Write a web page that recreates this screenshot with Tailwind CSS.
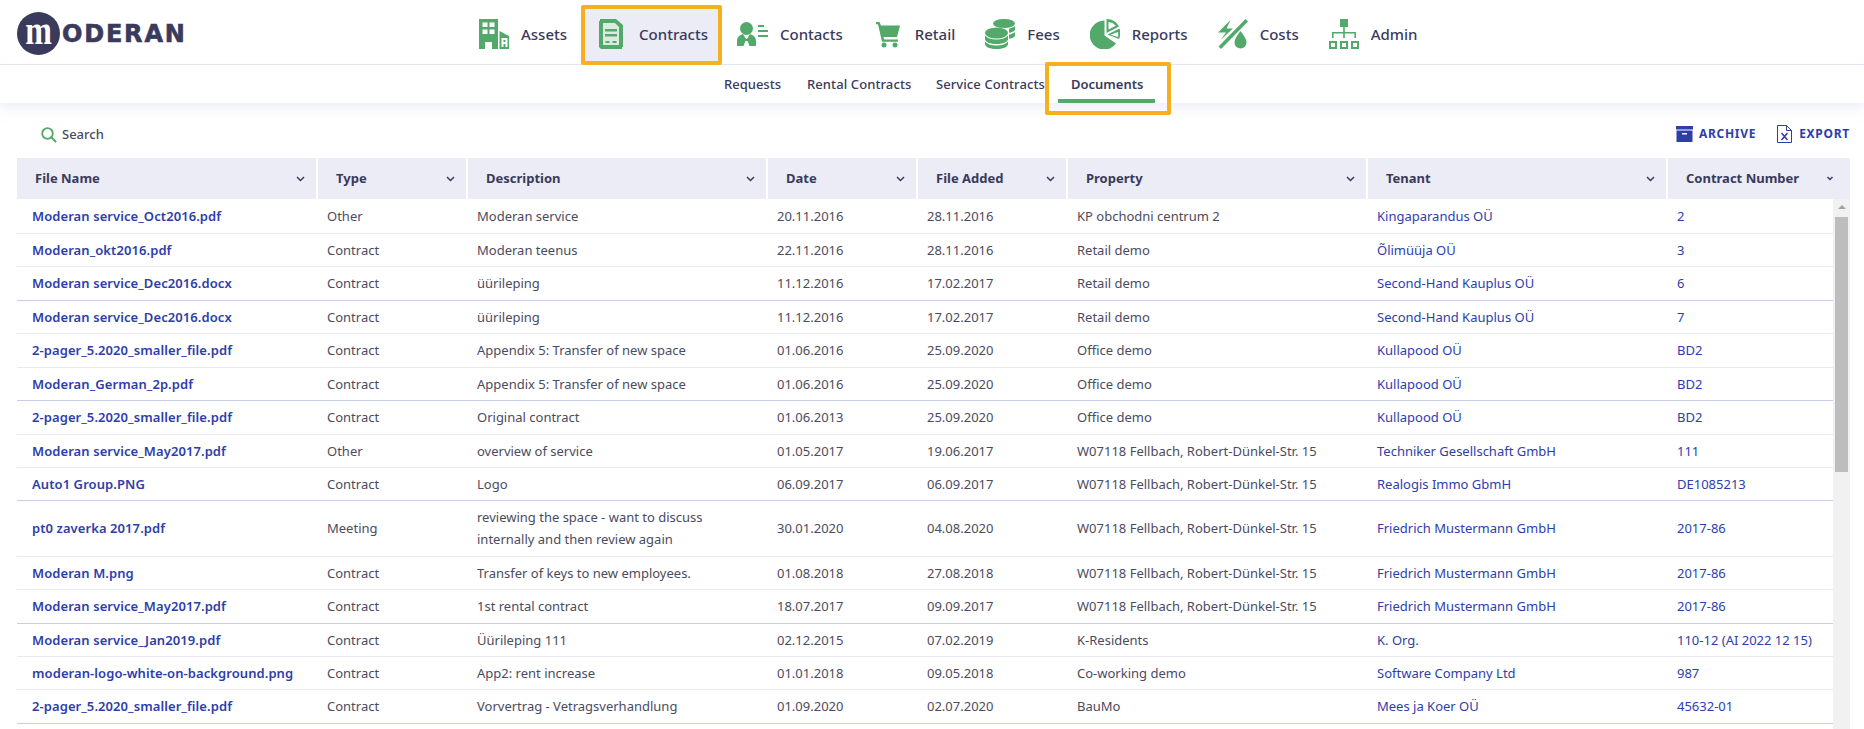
<!DOCTYPE html>
<html lang="en">
<head>
    <meta charset="UTF-8">
    <title>Moderan - Documents</title>
    <script src="https://cdn.jsdelivr.net/npm/@tailwindcss/browser@4"></script>
</head>
<body class="h-screen overflow-hidden bg-white font-['Noto_Sans',sans-serif] text-[13px] text-[#4b4b60]">

    <!-- top bar -->
    <header class="relative h-[65px] border-b border-[#e4e6f4]">
        <a href="#" class="absolute left-[17px] top-[12px] flex items-center">
            <span class="flex h-[43px] w-[43px] items-center justify-center rounded-full bg-[#3a3a5c] font-['Liberation_Serif',serif] text-[40px] leading-[34px] font-bold text-white"><span class="-mt-[6px] scale-x-[.8]">m</span></span>
            <span class="ml-[2px] font-['DejaVu_Sans',sans-serif] text-[24px] leading-none font-bold tracking-[1.8px] text-[#3a3a5c] [-webkit-text-stroke:0.6px_#3a3a5c]">ODERAN</span>
        </a>
        <nav class="absolute top-0 left-[464px] flex h-[68px] text-[15px] font-medium text-[#3a3a5c]">
            <a href="#" class="flex items-center gap-[12px] pr-[14px] pl-[15px]">
                <svg class="h-[30px] w-[30px] fill-[#52a96a]" viewBox="0 0 30 30"><path fill-rule="evenodd" d="M0 0h19v30h-6v-7H6v7H0zM3.500 3.500v4.500h5v-4.500zM10.500 3.500v4.500h5v-4.500zM3.500 10.500v4.500h5v-4.500zM10.500 10.500v4.500h5v-4.500z"/><path fill-rule="evenodd" d="M20.500 12l9.500 5v13h-9.500zM22.500 19v9h2v-3h2v3h2v-9zM24.500 21h2v2h-2z"/></svg>
                <span>Assets</span>
            </a>
            <a href="#" class="relative flex items-center gap-[13px] pr-[14px] pl-[15px]">
                <span class="absolute top-[5px] right-0 left-0 h-[60px] rounded-[2px] border-4 border-[#f6b01e] bg-[#ebecf5]"></span>
                <svg class="relative h-[30px] w-[30px]" viewBox="0 0 30 30"><path fill="#52a96a" d="M3 2h1V0h16l7 6v22h-1v2H5l-2-2z"/><path fill="#dcebe0" d="M7 4h12l4 4v18H7z"/><path fill="#52a96a" d="M9 10h12v2.500H9zM9 15h12v2.500H9zM9.500 22h4v2h-4zM16.500 22h4v2h-4z"/></svg>
                <span class="relative">Contracts</span>
            </a>
            <a href="#" class="flex items-center gap-[12px] px-[15px]">
                <svg class="h-[30px] w-[31px] fill-[#52a96a]" viewBox="0 0 31 30"><circle cx="9.500" cy="9.500" r="6.500"/><path d="M0 27v-5c0-4 3-6 6-7l3 5 1 0 3-5c3 1 6 3 6 7v5h-6.500l-2-5-2 0-2 5z"/><path d="M21 6h6v2h-6zM21 11h10v2H21zM21 16h10v2H21z"/></svg>
                <span>Contacts</span>
            </a>
            <a href="#" class="flex items-center gap-[12px] px-[15px]">
                <svg class="h-[30px] w-[30px] fill-[#52a96a]" viewBox="0 0 30 30"><path d="M3 3h3.500l1.500 3.500h19l-3 11.500H10.500l.7 2.500H25v2.300H9L5 5.300H3z"/><circle cx="11" cy="26" r="2.500"/><circle cx="22" cy="26" r="2.500"/></svg>
                <span>Retail</span>
            </a>
            <a href="#" class="flex items-center gap-[12px] px-[15px]">
                <svg class="h-[30px] w-[30px] fill-[#52a96a]" viewBox="0 0 30 30"><ellipse cx="19" cy="4.500" rx="11" ry="4.500"/><path d="M24 9.500c2-.3 4.500-1.200 6-2.500v4c-1 1.500-3 2.400-6 2.800zM24 15.500c2.300-.3 4.700-1.200 6-2.500v4c-1 1.500-3 2.400-6 2.800z"/><ellipse cx="11.500" cy="14" rx="11.500" ry="5.500"/><path d="M0 16.500c2 2.500 6 4 11.500 4s9.500-1.500 11.500-4v4c-1 3-5.500 4.500-11.500 4.500S1 23.500 0 20.500z"/><path d="M0 22.500c2 2.800 6 4 11.500 4s9.500-1.200 11.500-4v3c-1 3-5.500 4.500-11.500 4.500S1 28.500 0 25.500z"/></svg>
                <span>Fees</span>
            </a>
            <a href="#" class="flex items-center gap-[12px] px-[15px]">
                <svg class="h-[30px] w-[30px] fill-[#52a96a]" viewBox="0 0 30 30"><path d="M14.500 1.500A14.500 14.500 0 1 0 26 24.500L14.500 16.500z"/><path fill-rule="evenodd" d="M16.500 0A14 14 0 0 1 29 7.500L16.500 14zM18.500 3v7.500l7.300-3.800A11 11 0 0 0 18.500 3z"/><path d="M17.500 15.500L29.500 9.500A14.500 14.500 0 0 1 29 20zM20.500 15.700L28 18a11 11 0 0 0 0-5z"/></svg>
                <span>Reports</span>
            </a>
            <a href="#" class="flex items-center gap-[12px] px-[15px]">
                <svg class="h-[30px] w-[30px] fill-[#52a96a]" viewBox="0 0 30 30"><path d="M12.500 1L0 13.500h8L2.500 21 15 9.500H8.500z"/><path d="M27.500 0L30 2.500 3 30l-2.500-2.500z"/><path d="M22.500 12c3 4 6 8 6 11.500a6 6 0 0 1-12 0c0-3.500 3-7.500 6-11.500z"/></svg>
                <span>Costs</span>
            </a>
            <a href="#" class="flex items-center gap-[12px] px-[15px]">
                <svg class="h-[30px] w-[30px] fill-[#52a96a]" viewBox="0 0 30 30"><path d="M11 0h8v8h-8zM14.200 8h1.600v5H27v6h-1.600v-4.400H15.800V19h-1.600v-4.400H4.600V19H3v-6h11.200z"/><path fill-rule="evenodd" d="M0 22h8v8H0zM2 24v4h4v-4zM11 22h8v8h-8zM13 24v4h4v-4zM22 22h8v8h-8zM24 24v4h4v-4z"/></svg>
                <span>Admin</span>
            </a>
        </nav>
    </header>

    <!-- sub navigation -->
    <nav class="relative flex h-[38px] pl-[711px] shadow-[0_6px_10px_rgba(226,228,244,0.55)]">
        <a href="#" class="flex h-[38px] items-center px-[13px] pt-[2px] font-medium text-[#3a3a5c]">Requests</a>
        <a href="#" class="flex h-[38px] items-center pr-[11.500px] pl-[13px] pt-[2px] font-medium tracking-[0.1px] text-[#3a3a5c]">Rental Contracts</a>
        <a href="#" class="flex h-[38px] items-center px-[13px] pt-[2px] font-medium tracking-[0.1px] text-[#3a3a5c]">Service Contracts</a>
        <a href="#" class="relative flex h-[38px] items-center pr-[12px] pl-[13px] pt-[2px] font-semibold text-[#3a3a5c]">
            Documents
            <span class="absolute right-0 bottom-0 left-0 h-[4px] bg-[#52a96a]"></span>
            <span class="absolute -top-[3px] -right-[16px] -left-[13px] h-[53px] rounded-[2px] border-4 border-[#f6b01e]"></span>
        </a>
    </nav>

    <!-- toolbar -->
    <div class="flex h-[55px] items-start justify-between pt-[22px] pr-[14px] pl-[41px]">
        <a href="#" class="flex items-center gap-[5px]">
            <svg class="h-[16px] w-[16px] fill-none stroke-[#52a96a]" viewBox="0 0 16 16"><circle cx="6.500" cy="6.500" r="5.300" stroke-width="1.800"/><path d="M10.500 10.500L15 15" stroke-width="2"/></svg>
            <span class="font-medium">Search</span>
        </a>
        <div class="flex items-center text-[12px] font-bold tracking-[0.06em] text-[#2d3eab]">
            <a href="#" class="flex items-center gap-[6px]">
                <svg class="h-[16px] w-[17px] fill-[#2d3eab]" viewBox="0 0 17 16"><path d="M0 0h17v3.500H0z"/><path fill-rule="evenodd" d="M.5 4.500h16V16H.5zM6 7v1.500h5V7z"/></svg>
                <span>ARCHIVE</span>
            </a>
            <a href="#" class="ml-[21px] flex items-center gap-[7px]">
                <svg class="h-[18px] w-[15px] fill-none stroke-[#2d3eab]" viewBox="0 0 15 18"><path d="M.5.500h9l5 5v12H.5zM9.500.500v5h5" stroke-width="1"/><path d="M4.500 8l6 7M10.500 8l-6 7" stroke-width="1.500"/></svg>
                <span>EXPORT</span>
            </a>
        </div>
    </div>

    <!-- table head -->
    <div class="ml-[17px] grid h-[41px] w-[1833px] grid-cols-[299px_148px_298px_148px_148px_298px_298px_182px] gap-[2px] font-bold text-[#3a3a5c] [&>div]:flex [&>div]:items-center [&>div]:justify-between [&>div]:bg-[#ebecf5] [&>div]:pr-[11px] [&>div]:pl-[18px]">
        <div>File Name<svg class="h-[6px] w-[9px] fill-none stroke-[#3a3a5c] stroke-[1.500]" viewBox="0 0 9 6"><path d="M1 1l3.500 3.500L8 1"/></svg></div>
        <div>Type<svg class="h-[6px] w-[9px] fill-none stroke-[#3a3a5c] stroke-[1.500]" viewBox="0 0 9 6"><path d="M1 1l3.500 3.500L8 1"/></svg></div>
        <div>Description<svg class="h-[6px] w-[9px] fill-none stroke-[#3a3a5c] stroke-[1.500]" viewBox="0 0 9 6"><path d="M1 1l3.500 3.500L8 1"/></svg></div>
        <div>Date<svg class="h-[6px] w-[9px] fill-none stroke-[#3a3a5c] stroke-[1.500]" viewBox="0 0 9 6"><path d="M1 1l3.500 3.500L8 1"/></svg></div>
        <div>File Added<svg class="h-[6px] w-[9px] fill-none stroke-[#3a3a5c] stroke-[1.500]" viewBox="0 0 9 6"><path d="M1 1l3.500 3.500L8 1"/></svg></div>
        <div>Property<svg class="h-[6px] w-[9px] fill-none stroke-[#3a3a5c] stroke-[1.500]" viewBox="0 0 9 6"><path d="M1 1l3.500 3.500L8 1"/></svg></div>
        <div>Tenant<svg class="h-[6px] w-[9px] fill-none stroke-[#3a3a5c] stroke-[1.500]" viewBox="0 0 9 6"><path d="M1 1l3.500 3.500L8 1"/></svg></div>
        <div class="pr-[17px]!">Contract Number<svg class="h-[5px] w-[6px] fill-none stroke-[#3a3a5c] stroke-[1.500]" viewBox="0 0 6 5"><path d="M.500 1L3 3.500 5.500 1"/></svg></div>
    </div>

    <!-- table body + scrollbar -->
    <div class="ml-[17px] flex h-[530px] w-[1833px]">
        <table class="w-[1816px] table-fixed self-start border-collapse [&_a]:text-[#2d3eab] [&_td]:pt-[2px] [&_td]:pr-[15px] [&_td]:pl-[9px] [&_td:first-child]:pl-[15px] [&_td:first-child_a]:font-semibold [&_td:first-child_a]:tracking-[0.08px]">
            <colgroup>
                <col class="w-[301px]"><col class="w-[150px]"><col class="w-[300px]"><col class="w-[150px]"><col class="w-[150px]"><col class="w-[300px]"><col class="w-[300px]"><col class="w-[165px]">
            </colgroup>
            <tbody>
                <tr class="h-[34px] border-b border-[#e9e9f5]"><td><a href="#">Moderan service_Oct2016.pdf</a></td><td>Other</td><td>Moderan service</td><td>20.11.2016</td><td>28.11.2016</td><td>KP obchodni centrum 2</td><td><a href="#">Kingaparandus OÜ</a></td><td><a href="#">2</a></td></tr>
                <tr class="h-[33px] border-b border-[#e9e9f5]"><td><a href="#">Moderan_okt2016.pdf</a></td><td>Contract</td><td>Moderan teenus</td><td>22.11.2016</td><td>28.11.2016</td><td>Retail demo</td><td><a href="#">Õlimüüja OÜ</a></td><td><a href="#">3</a></td></tr>
                <tr class="h-[34px] border-b border-[#c9cdea]"><td><a href="#">Moderan service_Dec2016.docx</a></td><td>Contract</td><td>üürileping</td><td>11.12.2016</td><td>17.02.2017</td><td>Retail demo</td><td><a href="#">Second-Hand Kauplus OÜ</a></td><td><a href="#">6</a></td></tr>
                <tr class="h-[33px] border-b border-[#e9e9f5]"><td><a href="#">Moderan service_Dec2016.docx</a></td><td>Contract</td><td>üürileping</td><td>11.12.2016</td><td>17.02.2017</td><td>Retail demo</td><td><a href="#">Second-Hand Kauplus OÜ</a></td><td><a href="#">7</a></td></tr>
                <tr class="h-[34px] border-b border-[#e9e9f5]"><td><a href="#">2-pager_5.2020_smaller_file.pdf</a></td><td>Contract</td><td>Appendix 5: Transfer of new space</td><td>01.06.2016</td><td>25.09.2020</td><td>Office demo</td><td><a href="#">Kullapood OÜ</a></td><td><a href="#">BD2</a></td></tr>
                <tr class="h-[33px] border-b border-[#c9cdea]"><td><a href="#">Moderan_German_2p.pdf</a></td><td>Contract</td><td>Appendix 5: Transfer of new space</td><td>01.06.2016</td><td>25.09.2020</td><td>Office demo</td><td><a href="#">Kullapood OÜ</a></td><td><a href="#">BD2</a></td></tr>
                <tr class="h-[34px] border-b border-[#e9e9f5]"><td><a href="#">2-pager_5.2020_smaller_file.pdf</a></td><td>Contract</td><td>Original contract</td><td>01.06.2013</td><td>25.09.2020</td><td>Office demo</td><td><a href="#">Kullapood OÜ</a></td><td><a href="#">BD2</a></td></tr>
                <tr class="h-[33px] border-b border-[#e9e9f5]"><td><a href="#">Moderan service_May2017.pdf</a></td><td>Other</td><td>overview of service</td><td>01.05.2017</td><td>19.06.2017</td><td>W07118 Fellbach, Robert-Dünkel-Str. 15</td><td><a href="#">Techniker Gesellschaft GmbH</a></td><td><a href="#">111</a></td></tr>
                <tr class="h-[33px] border-b border-[#c9cdea]"><td><a href="#">Auto1 Group.PNG</a></td><td>Contract</td><td>Logo</td><td>06.09.2017</td><td>06.09.2017</td><td>W07118 Fellbach, Robert-Dünkel-Str. 15</td><td><a href="#">Realogis Immo GbmH</a></td><td><a href="#">DE1085213</a></td></tr>
                <tr class="h-[56px] border-b border-[#e9e9f5]"><td><a href="#">pt0 zaverka 2017.pdf</a></td><td>Meeting</td><td class="pt-0! leading-[22px]">reviewing the space - want to discuss internally and then review again</td><td>30.01.2020</td><td>04.08.2020</td><td>W07118 Fellbach, Robert-Dünkel-Str. 15</td><td><a href="#">Friedrich Mustermann GmbH</a></td><td><a href="#">2017-86</a></td></tr>
                <tr class="h-[33px] border-b border-[#e9e9f5]"><td><a href="#">Moderan M.png</a></td><td>Contract</td><td>Transfer of keys to new employees.</td><td>01.08.2018</td><td>27.08.2018</td><td>W07118 Fellbach, Robert-Dünkel-Str. 15</td><td><a href="#">Friedrich Mustermann GmbH</a></td><td><a href="#">2017-86</a></td></tr>
                <tr class="h-[34px] border-b border-[#c9cdea]"><td><a href="#">Moderan service_May2017.pdf</a></td><td>Contract</td><td>1st rental contract</td><td>18.07.2017</td><td>09.09.2017</td><td>W07118 Fellbach, Robert-Dünkel-Str. 15</td><td><a href="#">Friedrich Mustermann GmbH</a></td><td><a href="#">2017-86</a></td></tr>
                <tr class="h-[33px] border-b border-[#e9e9f5]"><td><a href="#">Moderan service_Jan2019.pdf</a></td><td>Contract</td><td>Üürileping 111</td><td>02.12.2015</td><td>07.02.2019</td><td>K-Residents</td><td><a href="#">K. Org.</a></td><td><a href="#">110-12 (AI 2022 12 15)</a></td></tr>
                <tr class="h-[33px] border-b border-[#e9e9f5]"><td><a href="#">moderan-logo-white-on-background.png</a></td><td>Contract</td><td>App2: rent increase</td><td>01.01.2018</td><td>09.05.2018</td><td>Co-working demo</td><td><a href="#">Software Company Ltd</a></td><td><a href="#">987</a></td></tr>
                <tr class="h-[34px] border-b border-[#c9cdea]"><td><a href="#">2-pager_5.2020_smaller_file.pdf</a></td><td>Contract</td><td>Vorvertrag - Vetragsverhandlung</td><td>01.09.2020</td><td>02.07.2020</td><td>BauMo</td><td><a href="#">Mees ja Koer OÜ</a></td><td><a href="#">45632-01</a></td></tr>
            </tbody>
        </table>
        <div class="w-[17px] bg-[#f1f1f1] px-[2px] pt-[6px]">
            <div class="mx-auto h-0 w-0 border-x-[4px] border-b-[4px] border-x-transparent border-b-[#a3a3a3]"></div>
            <div class="mt-[8px] h-[255px] bg-[#bdbdbd]"></div>
        </div>
    </div>

</body>
</html>
